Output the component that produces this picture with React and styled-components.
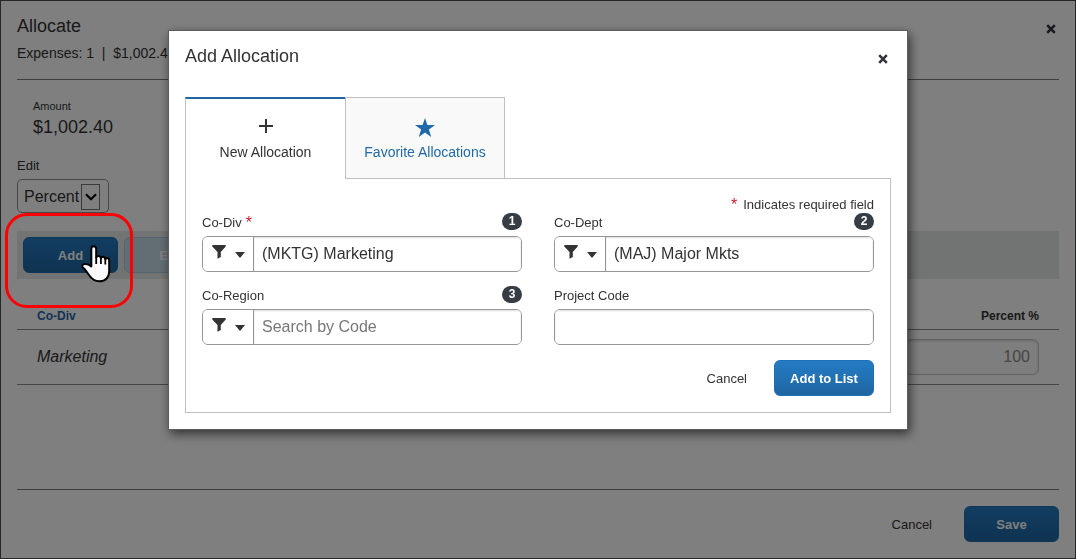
import React from "react";
import styled, { createGlobalStyle, css } from "styled-components";

const GlobalStyle = createGlobalStyle`
  *, *::before, *::after { box-sizing: border-box; }
  body {
    margin: 0;
    background: #ffffff;
    color: #333333;
    font-family: "Liberation Sans", Arial, Helvetica, sans-serif;
    font-size: 13px;
    line-height: 18px;
  }
  button, input, select { font-family: inherit; color: inherit; margin: 0; }
  h1, h2, p, dl, dd { margin: 0; }
`;

const Page = styled.main`
  display: flex;
  flex-direction: column;
  min-height: 100vh;
  padding: 0 16px;
  border: 1px solid #4c4c4c;
`;

const Header = styled.header`
  display: flex;
  justify-content: space-between;
  align-items: flex-start;
  padding-top: 14px;
`;

const Title = styled.h2`
  font-size: 18px;
  line-height: 22px;
  font-weight: 400;
`;

const CloseButton = styled.button`
  display: flex;
  padding: 3px;
  margin-top: 6px;
  border: 0;
  background: none;
  cursor: pointer;
`;

const Summary = styled.p`
  padding: 6px 0 16px;
  border-bottom: 1px solid #7c7c7c;
  font-size: 14px;
  line-height: 20px;
  white-space: pre;
`;

const Amount = styled.dl`
  padding: 17px 16px 0;
  dt { font-size: 11px; line-height: 18px; }
  dd { font-size: 18px; line-height: 24px; }
`;

const EditField = styled.div`
  display: flex;
  flex-direction: column;
  align-items: flex-start;
  gap: 4px;
  padding-top: 18px;
`;

const SelectBox = styled.div`
  position: relative;
`;

const Select = styled.select`
  display: block;
  width: 92px;
  height: 34px;
  padding: 0 6px;
  border: 1px solid #8f8f94;
  border-radius: 5px;
  background: transparent;
  font-size: 16px;
  appearance: none;
`;

const SelectArrow = styled.span`
  position: absolute;
  top: 5px;
  right: 9px;
  display: flex;
  align-items: center;
  justify-content: center;
  width: 19px;
  height: 26px;
  border: 1px solid #777777;
  pointer-events: none;
`;

const Toolbar = styled.div`
  display: flex;
  gap: 6px;
  margin-top: 18px;
  padding: 6px;
  background: #e2e8e6;
`;

const PrimaryButton = styled.button`
  min-width: ${(p) => (p.$wide ? 100 : 95)}px;
  height: 36px;
  padding: 0 8px;
  border: 1px solid #1f6fb4;
  border-radius: 6px;
  background: linear-gradient(#247bc4, #1f66a2);
  color: #ffffff;
  font-size: 13px;
  font-weight: 700;
  cursor: pointer;
  &:disabled {
    border-color: #a6c6e2;
    background: #c5dbe9;
    cursor: default;
  }
`;

const PlainButton = styled.button`
  height: 36px;
  padding: 0;
  border: 0;
  background: none;
  font-size: 13px;
  cursor: pointer;
`;

const Highlighted = styled.div`
  position: relative;
  display: flex;
`;

const Callout = styled.span`
  position: absolute;
  z-index: 3;
  top: -24px;
  left: -18px;
  width: 128px;
  height: 95px;
  border: 3px solid #ff0000;
  border-radius: 22px;
  pointer-events: none;
`;

const Pointer = styled.svg`
  position: absolute;
  z-index: 3;
  top: 8px;
  left: 58px;
  pointer-events: none;
`;

const Table = styled.table`
  width: 100%;
  margin-top: 24px;
  border-collapse: separate;
  border-spacing: 0;
  th, td {
    padding: 0 20px;
    border-bottom: 1px solid #8c8c8c;
    text-align: left;
  }
  th {
    height: 27px;
    font-size: 12px;
  }
  td {
    height: 55px;
    font-size: 16px;
    font-style: italic;
  }
  th:last-child, td:last-child { text-align: right; }
`;

const SortLink = styled.a`
  color: #1f69a8;
  text-decoration: none;
`;

const PercentInput = styled.input`
  display: block;
  width: 134px;
  height: 36px;
  margin-left: auto;
  padding: 0 8px;
  border: 1px solid #c4c4c8;
  border-radius: 6px;
  background: #fdfdfd;
  box-shadow: inset 0 1px 3px #d0d0d0;
  color: #8c8c8c;
  font-size: 16px;
  text-align: right;
`;

const Actions = styled.div`
  display: flex;
  justify-content: flex-end;
  ${(p) =>
    p.$footer
      ? css`
          gap: 32px;
          margin-top: auto;
          padding: 16px 0;
          border-top: 1px solid #7c7c7c;
        `
      : css`
          gap: 27px;
          margin-top: 15px;
        `}
`;

const Overlay = styled.div`
  position: fixed;
  z-index: 2;
  inset: 0;
  display: flex;
  align-items: flex-start;
  justify-content: center;
  padding: 30px 16px;
  background: rgba(0, 0, 0, 0.5);
`;

const Dialog = styled.section`
  width: 100%;
  max-width: 740px;
  padding: 0 16px 16px;
  border: 1px solid #5c5c5c;
  background: #ffffff;
  background-clip: padding-box;
  box-shadow: 2px 4px 10px rgba(0, 0, 0, 0.6);
`;

const Tabs = styled.div`
  position: relative;
  display: flex;
  margin-top: 30px;
`;

const Tab = styled.button`
  display: flex;
  flex-direction: column;
  align-items: center;
  gap: 6px;
  width: 160px;
  height: 82px;
  padding: 20px 0 0;
  border: solid #c0c0c0;
  font-size: 14px;
  line-height: 18px;
  cursor: pointer;
  ${(p) =>
    p.$active
      ? css`
          border-width: 2px 0 0 1px;
          border-top-color: #1f66a3;
          padding-top: 19px;
          background: #ffffff;
        `
      : css`
          border-width: 1px;
          background: #f9f9f9;
          color: #1f69a8;
        `}
`;

const Panel = styled.form`
  padding: 16px;
  margin-top: -1px;
  border: 1px solid #c0c0c0;
`;

const Required = styled.span`
  color: #d0162f;
  font-size: 16px;
`;

const RequiredNote = styled.p`
  display: flex;
  justify-content: flex-end;
  gap: 6px;
  height: 18px;
  line-height: 20px;
`;

const Fields = styled.div`
  display: grid;
  grid-template-columns: 1fr 1fr;
  gap: 14px 32px;
`;

const FieldHead = styled.div`
  display: flex;
  justify-content: space-between;
  height: 18px;
  margin-bottom: 5px;
  line-height: 20px;
  label { display: flex; gap: 4px; }
`;

const Badge = styled.span`
  width: 20px;
  height: 17px;
  border-radius: 9px;
  background: #363d45;
  color: #ffffff;
  font-size: 12px;
  font-weight: 700;
  line-height: 17px;
  text-align: center;
`;

const Control = styled.div`
  display: flex;
  height: 36px;
  border: 1px solid #95959b;
  border-radius: 6px;
  overflow: hidden;
`;

const FilterButton = styled.button`
  display: flex;
  gap: 9px;
  flex: none;
  width: 51px;
  padding: 8px 0 0 9px;
  border: 0;
  border-right: 1px solid #95959b;
  background: #ffffff;
  cursor: pointer;
`;

const TextInput = styled.input`
  flex: 1;
  min-width: 0;
  padding: 0 8px;
  border: 0;
  background: #ffffff;
  box-shadow: inset 0 1px 2px #dddddd;
  font-size: 16px;
  &::placeholder { color: #777777; opacity: 1; }
`;

const CrossIcon = () => (
  <svg width="10" height="10" viewBox="0 0 10 10" aria-hidden="true">
    <path d="M1.200 1.200 8.800 8.800M8.800 1.200 1.200 8.800" stroke="#32363c" strokeWidth="2.600" />
  </svg>
);

const PlusIcon = () => (
  <svg width="16" height="19" viewBox="0 0 16 19" aria-hidden="true">
    <path d="M8 1v14M1 8h14" stroke="#333333" strokeWidth="2" />
  </svg>
);

const StarIcon = () => (
  <svg width="20" height="19" viewBox="0 0 20 19" aria-hidden="true">
    <path d="M10 0 12.400 7.100H20L13.900 11.600 16.200 19 10 14.500 3.800 19 6.100 11.600 0 7.100H7.600Z" fill="#1f69a8" />
  </svg>
);

const FilterIcon = () => (
  <svg width="14" height="14" viewBox="0 0 14 14" aria-hidden="true">
    <path d="M.3 0h13.400v1.500L8.800 7v5L5.500 13.800V7L.3 1.500Z" fill="#333333" />
  </svg>
);

const CaretIcon = () => (
  <svg width="10" height="14" viewBox="0 0 10 14" aria-hidden="true">
    <path d="M0 7h10L5 13Z" fill="#333333" />
  </svg>
);

const HandPointer = () => (
  <Pointer width="30" height="38" viewBox="0 0 30 38" aria-hidden="true">
    <path
      d="M12.700 1.200C11.100 1.200 10.300 2.400 10.300 4v17.600C8.400 19.600 6 18.600 3.500 19c-2 .4-2.800 1.800-1.800 3.400C4.500 24 6 27.500 8 30c2.500 3.800 5.500 6.300 10.500 6.300C24.500 36.300 28.200 32 28.200 26.500V15.500c0-1.500-.7-2.500-2-2.500-1 0-1.500.5-1.900 1.200-.2-1.600-.9-2.400-2.300-2.400-1.200 0-1.800.6-2.100 1.400-.3-1.600-1-2.300-2.300-2.300-1.400 0-2.100.6-2.400 1.500V4c0-1.600-.9-2.800-2.500-2.800Z"
      fill="#fafafa"
      stroke="#000000"
      strokeWidth="2"
      strokeLinejoin="round"
    />
    <path d="M15.200 12v7M19.900 13v6M24.300 14v5.500" stroke="#000000" strokeWidth="1.800" />
  </Pointer>
);

function Field({ id, label, required, badge, value, placeholder, filter }) {
  return (
    <div>
      <FieldHead>
        <label htmlFor={id}>
          {label}
          {required && <Required>*</Required>}
        </label>
        {badge && <Badge>{badge}</Badge>}
      </FieldHead>
      <Control>
        {filter && (
          <FilterButton type="button" aria-label={`Filter ${label}`}>
            <FilterIcon />
            <CaretIcon />
          </FilterButton>
        )}
        <TextInput id={id} type="text" defaultValue={value} placeholder={placeholder} />
      </Control>
    </div>
  );
}

export default function App() {
  return (
    <>
      <GlobalStyle />
      <Page>
        <Header>
          <Title as="h1">Allocate</Title>
          <CloseButton type="button" aria-label="Close">
            <CrossIcon />
          </CloseButton>
        </Header>
        <Summary>{"Expenses: 1  |  $1,002.40"}</Summary>
        <Amount>
          <dt>Amount</dt>
          <dd>$1,002.40</dd>
        </Amount>
        <EditField>
          <label htmlFor="edit-by">Edit</label>
          <SelectBox>
            <Select id="edit-by" defaultValue="Percent">
              <option>Percent</option>
            </Select>
            <SelectArrow>
              <svg width="12" height="8" viewBox="0 0 12 8" aria-hidden="true">
                <path d="M1 1.200 6 6.200 11 1.200" fill="none" stroke="#000000" strokeWidth="2.200" />
              </svg>
            </SelectArrow>
          </SelectBox>
        </EditField>
        <Toolbar>
          <Highlighted>
            <PrimaryButton type="button">Add</PrimaryButton>
            <Callout />
            <HandPointer />
          </Highlighted>
          <PrimaryButton type="button" disabled>
            Edit
          </PrimaryButton>
        </Toolbar>
        <Table>
          <thead>
            <tr>
              <th>
                <SortLink href="#co-div">Co-Div</SortLink>
              </th>
              <th>Percent %</th>
            </tr>
          </thead>
          <tbody>
            <tr>
              <td>Marketing</td>
              <td>
                <PercentInput aria-label="Percent %" defaultValue="100" />
              </td>
            </tr>
          </tbody>
        </Table>
        <Actions $footer>
          <PlainButton type="button">Cancel</PlainButton>
          <PrimaryButton type="button">Save</PrimaryButton>
        </Actions>
      </Page>
      <Overlay>
        <Dialog role="dialog" aria-modal="true" aria-labelledby="dialog-title">
          <Header>
            <Title id="dialog-title">Add Allocation</Title>
            <CloseButton type="button" aria-label="Close">
              <CrossIcon />
            </CloseButton>
          </Header>
          <Tabs role="tablist">
            <Tab type="button" role="tab" aria-selected="true" $active>
              <PlusIcon />
              New Allocation
            </Tab>
            <Tab type="button" role="tab" aria-selected="false">
              <StarIcon />
              Favorite Allocations
            </Tab>
          </Tabs>
          <Panel>
            <RequiredNote>
              <Required>*</Required>
              Indicates required field
            </RequiredNote>
            <Fields>
              <Field id="co-div" label="Co-Div" required badge="1" value="(MKTG) Marketing" filter />
              <Field id="co-dept" label="Co-Dept" badge="2" value="(MAJ) Major Mkts" filter />
              <Field id="co-region" label="Co-Region" badge="3" placeholder="Search by Code" filter />
              <Field id="project-code" label="Project Code" />
            </Fields>
            <Actions>
              <PlainButton type="button">Cancel</PlainButton>
              <PrimaryButton type="button" $wide>
                Add to List
              </PrimaryButton>
            </Actions>
          </Panel>
        </Dialog>
      </Overlay>
    </>
  );
}
